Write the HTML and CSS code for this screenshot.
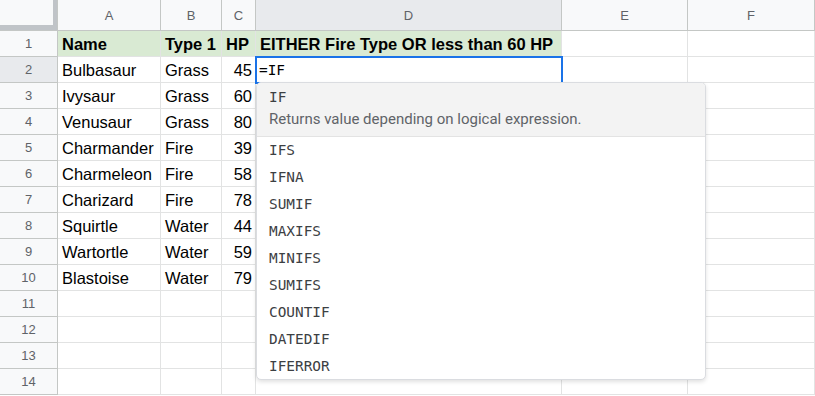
FILE: index.html
```html
<!DOCTYPE html>
<html lang="en">
<head>
    <meta charset="UTF-8">
    <meta name="viewport" content="width=device-width, initial-scale=1.0">
    <title>Pokemon - Sheet1</title>
    <link rel="stylesheet" href="styles.css">
</head>
<body>
    <div class="sheet">
        <!-- column headers -->
        <div class="corner"></div>
        <div class="col-head">A</div>
        <div class="col-head">B</div>
        <div class="col-head">C</div>
        <div class="col-head selected">D</div>
        <div class="col-head">E</div>
        <div class="col-head">F</div>

        <div class="row-head">1</div>
        <div class="cell title">Name</div>
        <div class="cell title">Type 1</div>
        <div class="cell title">HP</div>
        <div class="cell title">EITHER Fire Type OR less than 60 HP</div>
        <div class="cell"></div>
        <div class="cell"></div>

        <div class="row-head selected">2</div>
        <div class="cell">Bulbasaur</div>
        <div class="cell">Grass</div>
        <div class="cell num">45</div>
        <div class="cell active">
            <span class="formula">=IF</span>
            <div class="suggest">
                <div class="suggest-top">
                    <div class="fn">IF</div>
                    <div class="fn-desc">Returns value depending on logical expression.</div>
                </div>
                <ul class="suggest-list">
                    <li>IFS</li>
                    <li>IFNA</li>
                    <li>SUMIF</li>
                    <li>MAXIFS</li>
                    <li>MINIFS</li>
                    <li>SUMIFS</li>
                    <li>COUNTIF</li>
                    <li>DATEDIF</li>
                    <li>IFERROR</li>
                </ul>
            </div>
        </div>
        <div class="cell"></div>
        <div class="cell"></div>

        <div class="row-head">3</div>
        <div class="cell">Ivysaur</div>
        <div class="cell">Grass</div>
        <div class="cell num">60</div>
        <div class="cell"></div>
        <div class="cell"></div>
        <div class="cell"></div>

        <div class="row-head">4</div>
        <div class="cell">Venusaur</div>
        <div class="cell">Grass</div>
        <div class="cell num">80</div>
        <div class="cell"></div>
        <div class="cell"></div>
        <div class="cell"></div>

        <div class="row-head">5</div>
        <div class="cell">Charmander</div>
        <div class="cell">Fire</div>
        <div class="cell num">39</div>
        <div class="cell"></div>
        <div class="cell"></div>
        <div class="cell"></div>

        <div class="row-head">6</div>
        <div class="cell">Charmeleon</div>
        <div class="cell">Fire</div>
        <div class="cell num">58</div>
        <div class="cell"></div>
        <div class="cell"></div>
        <div class="cell"></div>

        <div class="row-head">7</div>
        <div class="cell">Charizard</div>
        <div class="cell">Fire</div>
        <div class="cell num">78</div>
        <div class="cell"></div>
        <div class="cell"></div>
        <div class="cell"></div>

        <div class="row-head">8</div>
        <div class="cell">Squirtle</div>
        <div class="cell">Water</div>
        <div class="cell num">44</div>
        <div class="cell"></div>
        <div class="cell"></div>
        <div class="cell"></div>

        <div class="row-head">9</div>
        <div class="cell">Wartortle</div>
        <div class="cell">Water</div>
        <div class="cell num">59</div>
        <div class="cell"></div>
        <div class="cell"></div>
        <div class="cell"></div>

        <div class="row-head">10</div>
        <div class="cell">Blastoise</div>
        <div class="cell">Water</div>
        <div class="cell num">79</div>
        <div class="cell"></div>
        <div class="cell"></div>
        <div class="cell"></div>

        <div class="row-head">11</div>
        <div class="cell"></div>
        <div class="cell"></div>
        <div class="cell"></div>
        <div class="cell"></div>
        <div class="cell"></div>
        <div class="cell"></div>

        <div class="row-head">12</div>
        <div class="cell"></div>
        <div class="cell"></div>
        <div class="cell"></div>
        <div class="cell"></div>
        <div class="cell"></div>
        <div class="cell"></div>

        <div class="row-head">13</div>
        <div class="cell"></div>
        <div class="cell"></div>
        <div class="cell"></div>
        <div class="cell"></div>
        <div class="cell"></div>
        <div class="cell"></div>

        <div class="row-head">14</div>
        <div class="cell"></div>
        <div class="cell"></div>
        <div class="cell"></div>
        <div class="cell"></div>
        <div class="cell"></div>
        <div class="cell"></div>
    </div>
</body>
</html>
```

FILE: styles.css
```css
body {
    margin: 0;
    background: #fff;
    font-family: "Liberation Sans", Arial, sans-serif;
    overflow: hidden;
}
.sheet {
    display: grid;
    grid-template-columns: 58px 103px 61px 34px 306px 126px 127px;
    grid-template-rows: 31px;
    grid-auto-rows: 26px;
    width: 815px;
}
.sheet > div {
    box-sizing: border-box;
    border-right: 1px solid #e2e3e3;
    border-bottom: 1px solid #e2e3e3;
}
.corner {
    background: #f8f9fa;
    box-shadow: inset -4px -5px 0 #c0c4c8;
    border-right-color: #c4c7c5 !important;
    border-bottom-color: #c4c7c5 !important;
}
.col-head, .row-head {
    background: #f8f9fa;
    color: #5f6368;
    font-size: 13px;
    display: flex;
    align-items: center;
    justify-content: center;
    border-right-color: #c4c7c5 !important;
    border-bottom-color: #c4c7c5 !important;
}
.col-head.selected, .row-head.selected {
    background: #e8eaed;
}
.cell {
    display: flex;
    align-items: center;
    padding: 1px 4px 0 4px;
    font-size: 16.5px;
    color: #000;
    white-space: nowrap;
}
.cell.title {
    background: #d9ead3;
    font-weight: bold;
}
.cell.num {
    justify-content: flex-end;
    padding-right: 3px;
}
.cell.active {
    position: relative;
    z-index: 2;
    outline: 2px solid #1a73e8;
    outline-offset: -1px;
    padding-left: 3px;
}
.formula {
    font-family: "DejaVu Sans Mono", "Liberation Mono", monospace;
    font-size: 14.4px;
    color: #000;
}
.suggest {
    position: absolute;
    top: 100%;
    left: 0;
    width: 450px;
    height: 298px;
    box-sizing: border-box;
    background: #fff;
    border: 1px solid #dadce0;
    border-radius: 5px;
    box-shadow: 0 2px 4px rgba(0, 0, 0, 0.12);
    overflow: hidden;
    white-space: normal;
}
.suggest-top {
    background: #f3f3f3;
    border-bottom: 1px solid #e3e3e3;
    padding: 4px 12px 6px 12px;
    height: 54px;
    box-sizing: border-box;
}
.fn {
    font-family: "DejaVu Sans Mono", "Liberation Mono", monospace;
    font-size: 14.4px;
    color: #3c4043;
    line-height: 21px;
}
.fn-desc {
    font-family: Roboto, "Liberation Sans", sans-serif;
    font-size: 15px;
    color: #5f6368;
    line-height: 22px;
}
.suggest-list {
    list-style: none;
    margin: 0;
    padding: 0;
}
.suggest-list li {
    font-family: "DejaVu Sans Mono", "Liberation Mono", monospace;
    font-size: 14.4px;
    color: #3c4043;
    height: 27px;
    line-height: 27px;
    padding-left: 12px;
}
```
